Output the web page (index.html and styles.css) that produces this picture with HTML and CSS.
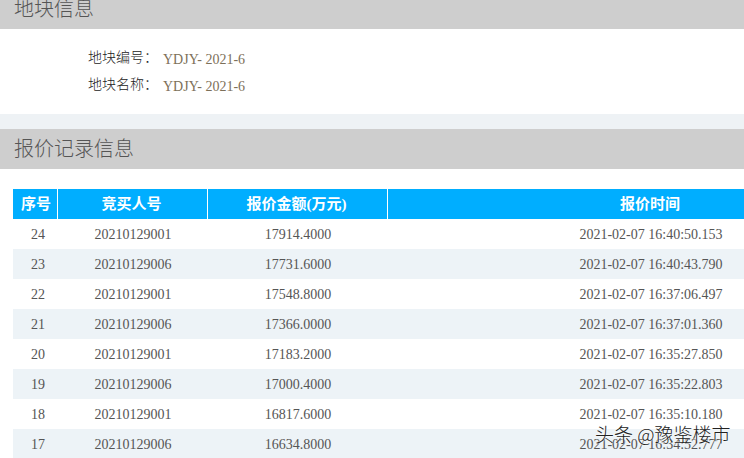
FILE: index.html
```html
<!DOCTYPE html>
<html lang="zh">
<head>
<meta charset="utf-8">
<title>报价记录信息</title>
<link rel="stylesheet" href="styles.css">
</head>
<body>
<div class="page">
  <section class="block">
    <h2 class="bar bar-top">地块信息</h2>
    <div class="info">
      <div class="info-row"><span class="label">地块编号：</span><span class="value">YDJY- 2021-6</span></div>
      <div class="info-row"><span class="label">地块名称：</span><span class="value">YDJY- 2021-6</span></div>
    </div>
  </section>
  <section class="block records">
    <h2 class="bar bar-main">报价记录信息</h2>
    <div class="table-wrap">
      <table class="bids">
        <colgroup><col class="c1"><col class="c2"><col class="c3"><col class="c4"></colgroup>
        <thead>
          <tr><th>序号</th><th>竞买人号</th><th>报价金额(万元)</th><th>报价时间</th></tr>
        </thead>
        <tbody>
          <tr><td>24</td><td>20210129001</td><td>17914.4000</td><td>2021-02-07 16:40:50.153</td></tr>
          <tr><td>23</td><td>20210129006</td><td>17731.6000</td><td>2021-02-07 16:40:43.790</td></tr>
          <tr><td>22</td><td>20210129001</td><td>17548.8000</td><td>2021-02-07 16:37:06.497</td></tr>
          <tr><td>21</td><td>20210129006</td><td>17366.0000</td><td>2021-02-07 16:37:01.360</td></tr>
          <tr><td>20</td><td>20210129001</td><td>17183.2000</td><td>2021-02-07 16:35:27.850</td></tr>
          <tr><td>19</td><td>20210129006</td><td>17000.4000</td><td>2021-02-07 16:35:22.803</td></tr>
          <tr><td>18</td><td>20210129001</td><td>16817.6000</td><td>2021-02-07 16:35:10.180</td></tr>
          <tr><td>17</td><td>20210129006</td><td>16634.8000</td><td>2021-02-07 16:34:52.777</td></tr>
        </tbody>
      </table>
    </div>
  </section>
  <div class="watermark">头条 @豫鉴楼市</div>
</div>
</body>
</html>
```
FILE: styles.css
```css
html, body {
  margin: 0;
  padding: 0;
  height: 100%;
  overflow: hidden;
  background: #eef2f5;
}
.page {
  position: relative;
  width: 744px;
  height: 458px;
  overflow: hidden;
  font-family: "Liberation Serif", "Noto Sans CJK SC", serif;
}
.block {
  background: #fff;
}
.records {
  margin-top: 15px;
  height: 329px;
}
.bar {
  margin: 0;
  background: #cecece;
  color: #555;
  font-family: "Noto Sans CJK SC", sans-serif;
  font-size: 20px;
  font-weight: 300;
  padding-left: 14px;
}
.bar-top {
  height: 29px;
  line-height: 15px;
}
.bar-main {
  height: 40px;
  line-height: 37px;
}
.info {
  height: 85px;
  box-sizing: border-box;
  padding: 15px 0 0 88px;
}
.info-row {
  display: flex;
  height: 27px;
  align-items: center;
}
.label {
  width: 75px;
  font-family: "Noto Sans CJK SC", sans-serif;
  font-size: 14px;
  font-weight: 300;
  color: #222;
  position: relative;
  top: -2px;
}
.value {
  font-size: 14px;
  color: #7d7059;
  padding-top: 4px;
}
.table-wrap {
  padding: 20px 0 0 13px;
}
.bids {
  width: 901px;
  table-layout: fixed;
  border-collapse: separate;
  border-spacing: 0;
}
.c1 { width: 45px; }
.c2 { width: 150px; }
.c3 { width: 180px; }
.c4 { width: 526px; }
.bids th {
  height: 30px;
  box-sizing: border-box;
  padding: 0 2px 4px 0;
  background: #00aeff;
  color: #fff;
  font-size: 15px;
  font-weight: bold;
  font-family: "Liberation Serif", "Noto Sans CJK SC", serif;
  border-right: 1px solid #fff;
}
.bids th:first-child {
  padding: 0 0 4px 2px;
}
.bids th:last-child {
  border-right: 0;
}
.bids td {
  height: 30px;
  box-sizing: border-box;
  padding: 2px 0 0;
  text-align: center;
  font-size: 14px;
  color: #555;
}
.bids td:first-child {
  padding-left: 5px;
}
.bids tbody tr:nth-child(even) td {
  background: #edf3f7;
}
.watermark {
  position: absolute;
  left: 595px;
  top: 422px;
  font-family: "Noto Sans CJK SC", sans-serif;
  font-size: 19px;
  line-height: 24px;
  font-weight: 300;
  color: #222;
  white-space: nowrap;
  text-shadow: 0 0 2px #fff, 0 0 2px #fff;
}
```
